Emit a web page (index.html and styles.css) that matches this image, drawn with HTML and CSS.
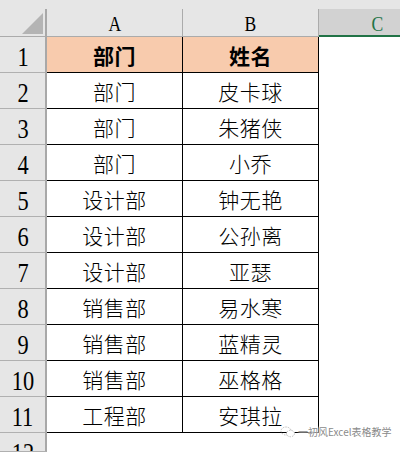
FILE: index.html
```html
<!DOCTYPE html>
<html lang="zh-CN">
<head>
<meta charset="utf-8">
<link rel="stylesheet" href="styles.css">
</head>
<body>
<div class="sheet">
  <div class="strip"></div>

  <div class="corner"><div class="tri"></div></div>
  <div class="colhead"><span class="lat">A</span></div>
  <div class="colhead"><span class="lat">B</span></div>
  <div class="colhead sel"><span class="lat">C</span></div>

  <div class="rowhead"><span class="num">1</span></div>
  <div class="cell head">部门</div>
  <div class="cell head">姓名</div>
  <div class="blank"></div>

  <div class="rowhead"><span class="num">2</span></div>
  <div class="cell">部门</div>
  <div class="cell">皮卡球</div>
  <div class="blank"></div>

  <div class="rowhead"><span class="num">3</span></div>
  <div class="cell">部门</div>
  <div class="cell">朱猪侠</div>
  <div class="blank"></div>

  <div class="rowhead"><span class="num">4</span></div>
  <div class="cell">部门</div>
  <div class="cell">小乔</div>
  <div class="blank"></div>

  <div class="rowhead"><span class="num">5</span></div>
  <div class="cell">设计部</div>
  <div class="cell">钟无艳</div>
  <div class="blank"></div>

  <div class="rowhead"><span class="num">6</span></div>
  <div class="cell">设计部</div>
  <div class="cell">公孙离</div>
  <div class="blank"></div>

  <div class="rowhead"><span class="num">7</span></div>
  <div class="cell">设计部</div>
  <div class="cell">亚瑟</div>
  <div class="blank"></div>

  <div class="rowhead"><span class="num">8</span></div>
  <div class="cell">销售部</div>
  <div class="cell">易水寒</div>
  <div class="blank"></div>

  <div class="rowhead"><span class="num">9</span></div>
  <div class="cell">销售部</div>
  <div class="cell">蓝精灵</div>
  <div class="blank"></div>

  <div class="rowhead"><span class="num">10</span></div>
  <div class="cell">销售部</div>
  <div class="cell">巫格格</div>
  <div class="blank"></div>

  <div class="rowhead"><span class="num">11</span></div>
  <div class="cell">工程部</div>
  <div class="cell">安琪拉</div>
  <div class="blank"></div>

  <div class="rowhead"><span class="num">12</span></div>
  <div class="blank"></div>
  <div class="blank"></div>
  <div class="blank"></div>
</div>

<div class="watermark">
  <svg class="wm-icon" width="16" height="12" viewBox="0 0 16 12">
    <ellipse cx="6" cy="5" rx="5" ry="4" fill="none" stroke="#bdbdbd" stroke-width="1" stroke-dasharray="1.5 1"/>
    <ellipse cx="10.5" cy="7.5" rx="4" ry="3.2" fill="#fff" stroke="#bdbdbd" stroke-width="1" stroke-dasharray="1.5 1"/>
  </svg>
  <span class="wm-text">一初风Excel表格教学</span>
</div>
</body>
</html>
```

FILE: styles.css
```css
html, body {
  margin: 0;
  padding: 0;
  background: #ffffff;
}

body {
  width: 400px;
  height: 452px;
  overflow: hidden;
  position: relative;
  font-family: "Noto Sans CJK SC", "Liberation Serif", serif;
  color: #000;
}

.sheet {
  display: grid;
  grid-template-columns: 47px 136px 136px 81px;
  grid-template-rows: 9px 28px repeat(11, 36px) 19px;
  overflow: hidden;
}

.strip {
  grid-column: 1 / -1;
  background: #e6e6e6;
}

.corner {
  background: #e6e6e6;
  border-right: 2px solid #a8a8a8;
  border-bottom: 1px solid #ababab;
  box-sizing: border-box;
  display: flex;
  justify-content: flex-end;
  align-items: flex-end;
  padding: 0 2px 2px 0;
}

.tri {
  width: 21px;
  height: 21px;
  background: #b4b4b4;
  clip-path: polygon(100% 0, 100% 100%, 0 100%);
}

.colhead {
  background: #e6e6e6;
  border-right: 1px solid #ababab;
  border-bottom: 1px solid #ababab;
  box-sizing: border-box;
  display: flex;
  justify-content: center;
  align-items: center;
  padding-top: 3px;
  color: #000;
}

.colhead.sel {
  background: #d2d2d2;
  border-right: none;
  border-bottom: 2px solid #217346;
  color: #217346;
  padding-left: 36px;
}

.lat {
  font-family: "Liberation Serif", serif;
  font-size: 22px;
  line-height: 1;
  display: inline-block;
  transform: scaleX(0.8);
}

.rowhead {
  background: #e6e6e6;
  border-right: 2px solid #a8a8a8;
  border-bottom: 1px solid #b0b0b0;
  box-sizing: border-box;
  display: flex;
  justify-content: center;
  align-items: flex-start;
  padding-top: 6px;
  overflow: hidden;
}

.num {
  font-family: "Liberation Serif", serif;
  font-size: 28px;
  line-height: 1;
  display: inline-block;
  transform: scaleX(0.8);
}

.cell {
  border-right: 1px solid #000;
  border-bottom: 1px solid #000;
  box-sizing: border-box;
  display: flex;
  justify-content: center;
  align-items: center;
  padding-top: 2px;
  font-size: 21px;
  font-weight: 300;
  line-height: 1;
  letter-spacing: 0.5px;
}

.cell.head {
  background: #f8cbad;
  font-weight: bold;
}

.blank {
  background: #fff;
}

.watermark {
  position: absolute;
  left: 280px;
  top: 426px;
  display: flex;
  align-items: center;
  gap: 2px;
}

.wm-icon {
  display: block;
}

.wm-text {
  font-family: "Noto Sans CJK SC", sans-serif;
  font-size: 10px;
  line-height: 12px;
  color: #8a8a8a;
  text-shadow: 0 0 2px #fff, 0 0 2px #fff, 0 0 3px #fff;
}
```
